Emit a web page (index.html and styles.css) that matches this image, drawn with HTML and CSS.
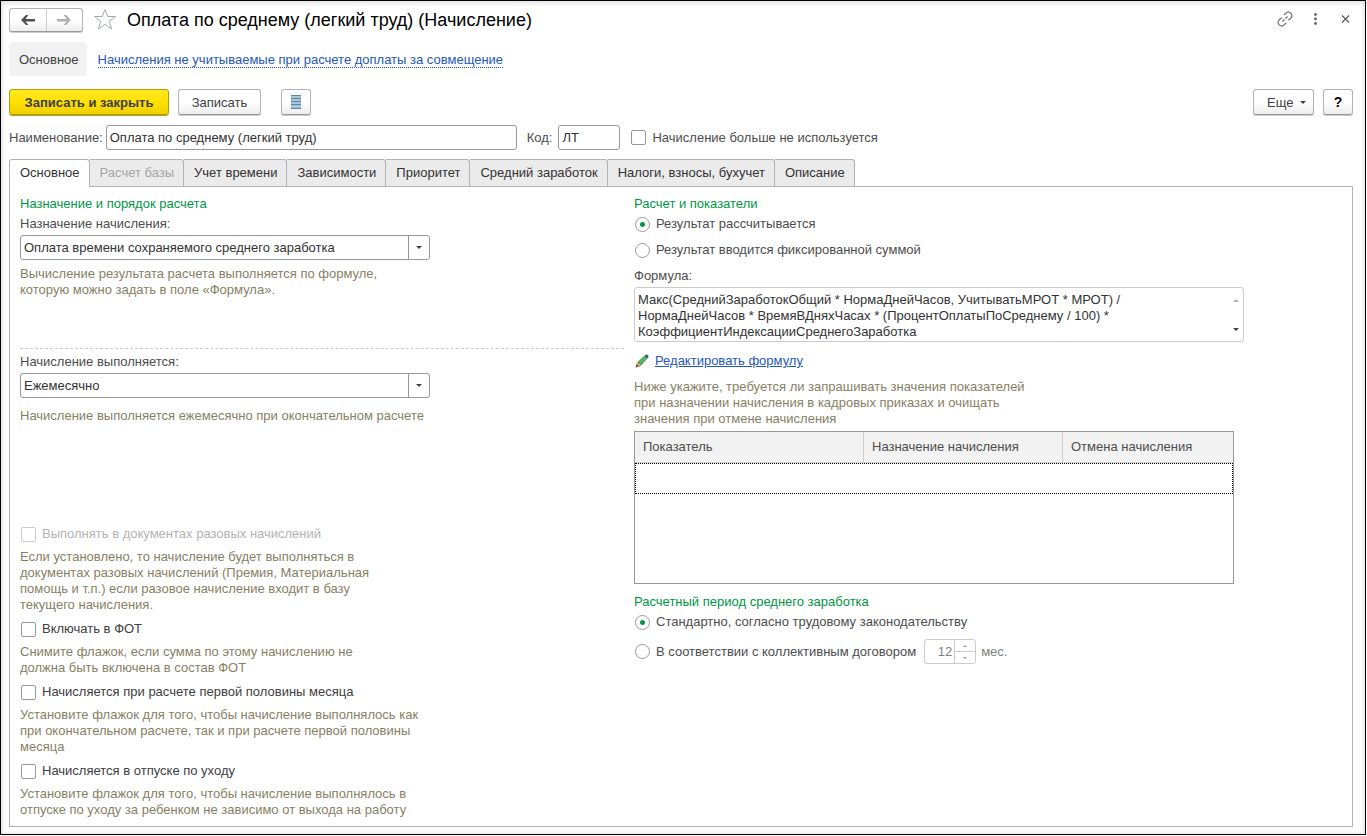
FILE: index.html
```html
<!DOCTYPE html>
<html lang="ru">
<head>
<meta charset="utf-8">
<title>Оплата по среднему (легкий труд) (Начисление)</title>
<link rel="stylesheet" href="styles.css">
</head>
<body>
<main class="window">
  <header class="titlebar">
    <div class="history">
      <button type="button" class="history-btn" aria-label="Назад">
        <svg width="14" height="10" viewBox="0 0 14 10"><path d="M0 5 5 0H7V.5L4.500 4H14V6.500H4.500L7 9.500V10H5Z" fill="#505050"/></svg>
      </button>
      <button type="button" class="history-btn" aria-label="Вперед">
        <svg width="14" height="10" viewBox="0 0 14 10"><path d="M14 5 9 0H7V.5L9.500 4H0V6.500H9.500L7 9.500V10H9Z" fill="#b0b0b0"/></svg>
      </button>
    </div>
    <button type="button" class="icon-btn star" aria-label="В избранное">
      <svg width="24" height="23" viewBox="0 0 24 23"><path d="M12 1.500 14.700 8.500H22.500L16.300 13.200 18.600 21 12 16.400 5.400 21 7.700 13.200 1.500 8.500H9.300Z" fill="#fff" stroke="#a3acb5" stroke-width="1"/></svg>
    </button>
    <h1 class="title">Оплата по среднему (легкий труд) (Начисление)</h1>
    <div class="window-tools">
      <button type="button" class="icon-btn" aria-label="Получить ссылку">
        <svg width="16" height="16" viewBox="0 0 16 16" fill="none" stroke="#666" stroke-width="1.100"><path d="M7 4 9.300 1.800Q11.500 0 13.800 2.200 16 4.500 14.200 6.700L12.500 8.500 10.800 9M9 12 6.700 14.200Q4.500 16 2.200 13.800 0 11.500 1.800 9.300L3.500 7.500 5.200 7M5.500 10.500l2-2M8.500 7.500l2-2"/></svg>
      </button>
      <button type="button" class="icon-btn" aria-label="Меню">
        <svg width="16" height="16" viewBox="0 0 16 16" fill="#666"><circle cx="8.500" cy="3.500" r="1.400"/><circle cx="8.500" cy="8" r="1.400"/><circle cx="8.500" cy="12.500" r="1.400"/></svg>
      </button>
      <button type="button" class="icon-btn" aria-label="Закрыть">
        <svg width="16" height="16" viewBox="0 0 16 16"><path d="M5 4.500l7 7M12 4.500l-7 7" stroke="#555" stroke-width="1.100"/></svg>
      </button>
    </div>
  </header>

  <nav class="sections">
    <span class="section-current">Основное</span>
    <a href="#" class="section-link">Начисления не учитываемые при расчете доплаты за совмещение</a>
  </nav>

  <div class="commands">
    <button type="button" class="btn btn-primary">Записать и закрыть</button>
    <button type="button" class="btn btn-save">Записать</button>
    <button type="button" class="btn btn-square btn-list" aria-label="Список">
      <svg width="10" height="14" viewBox="0 0 10 14"><path d="M0 0h10v14H0z" fill="#9dbdd3"/><path d="M0 .5h10M0 3.500h10M0 6.500h10M0 9.500h10M0 13.500h10" stroke="#6088a5"/><path d="M1 2h8M1 5h8M1 8h8M1 11.500h8" stroke="#b5cfe0"/></svg>
    </button>
    <div class="commands-right">
      <button type="button" class="btn btn-more">Еще <span class="caret"></span></button>
      <button type="button" class="btn btn-square btn-help">?</button>
    </div>
  </div>

  <div class="identity">
    <label for="name">Наименование:</label>
    <input id="name" class="field name" type="text" value="Оплата по среднему (легкий труд)">
    <label for="code" class="code-label">Код:</label>
    <input id="code" class="field code" type="text" value="ЛТ">
    <label class="option unused"><input type="checkbox" class="check">Начисление больше не используется</label>
  </div>

  <div class="tabs" role="tablist">
    <button type="button" role="tab" class="tab tab-active" aria-selected="true">Основное</button>
    <button type="button" role="tab" class="tab" disabled>Расчет базы</button>
    <button type="button" role="tab" class="tab">Учет времени</button>
    <button type="button" role="tab" class="tab">Зависимости</button>
    <button type="button" role="tab" class="tab">Приоритет</button>
    <button type="button" role="tab" class="tab">Средний заработок</button>
    <button type="button" role="tab" class="tab">Налоги, взносы, бухучет</button>
    <button type="button" role="tab" class="tab">Описание</button>
  </div>

  <div class="panel" role="tabpanel">
    <section class="column">
      <div class="purpose">
        <h2 class="group-title">Назначение и порядок расчета</h2>
        <label class="field-label" for="purpose">Назначение начисления:</label>
        <div class="combo"><select id="purpose" class="field combo-select"><option>Оплата времени сохраняемого среднего заработка</option></select></div>
        <p class="hint">Вычисление результата расчета выполняется по формуле,<br>которую можно задать в поле «Формула».</p>
      </div>
      <div class="schedule">
        <label class="field-label" for="schedule">Начисление выполняется:</label>
        <div class="combo"><select id="schedule" class="field combo-select"><option>Ежемесячно</option></select></div>
        <p class="hint hint-far">Начисление выполняется ежемесячно при окончательном расчете</p>
      </div>
      <div class="flags">
        <div class="flag">
          <label class="option option-disabled"><input type="checkbox" class="check" disabled>Выполнять в документах разовых начислений</label>
          <p class="hint">Если установлено, то начисление будет выполняться в<br>документах разовых начислений (Премия, Материальная<br>помощь и т.п.) если разовое начисление входит в базу<br>текущего начисления.</p>
        </div>
        <div class="flag">
          <label class="option"><input type="checkbox" class="check">Включать в ФОТ</label>
          <p class="hint">Снимите флажок, если сумма по этому начислению не<br>должна быть включена в состав ФОТ</p>
        </div>
        <div class="flag">
          <label class="option"><input type="checkbox" class="check">Начисляется при расчете первой половины месяца</label>
          <p class="hint">Установите флажок для того, чтобы начисление выполнялось как<br>при окончательном расчете, так и при расчете первой половины<br>месяца</p>
        </div>
        <div class="flag">
          <label class="option"><input type="checkbox" class="check">Начисляется в отпуске по уходу</label>
          <p class="hint">Установите флажок для того, чтобы начисление выполнялось в<br>отпуске по уходу за ребенком не зависимо от выхода на работу</p>
        </div>
      </div>
    </section>

    <section class="column">
      <h2 class="group-title">Расчет и показатели</h2>
      <div class="result-options">
        <label class="option"><input type="radio" name="result" class="radio" checked>Результат рассчитывается</label>
        <label class="option"><input type="radio" name="result" class="radio">Результат вводится фиксированной суммой</label>
        <label for="formula">Формула:</label>
      </div>
      <div class="formula">
        <textarea id="formula" class="formula-text" rows="3" readonly>Макс(СреднийЗаработокОбщий * НормаДнейЧасов, УчитыватьМРОТ * МРОТ) /
НормаДнейЧасов * ВремяВДняхЧасах * (ПроцентОплатыПоСреднему / 100) *
КоэффициентИндексацииСреднегоЗаработка</textarea>
        <div class="formula-scroll"><span class="caret caret-up"></span><span class="caret"></span></div>
      </div>
      <div class="edit">
        <svg width="14" height="14" viewBox="0 0 14 14"><path d="M.5 13.500 1.500 10 4 12.500Z" fill="#6a4a30"/><path d="M1.500 10 3 8 6 11 4 12.500Z" fill="#e8a85c" stroke="#9c7340" stroke-width=".5"/><path d="M3 8 9.500 2 12 4.500 6 11Z" fill="#50b860" stroke="#3d7d48" stroke-width=".6"/><path d="M9.500 2 11 .5H12L13.500 2V3L12 4.500Z" fill="#45556a"/></svg>
        <a href="#" class="edit-link">Редактировать формулу</a>
      </div>
      <p class="hint hint-table">Ниже укажите, требуется ли запрашивать значения показателей<br>при назначении начисления в кадровых приказах и очищать<br>значения при отмене начисления</p>
      <div class="grid-box">
        <table class="grid">
          <thead><tr><th class="col-name">Показатель</th><th class="col-assign">Назначение начисления</th><th>Отмена начисления</th></tr></thead>
          <tbody><tr><td colspan="3"></td></tr></tbody>
        </table>
      </div>
      <h2 class="group-title">Расчетный период среднего заработка</h2>
      <div class="period-options">
        <label class="option"><input type="radio" name="period" class="radio" checked>Стандартно, согласно трудовому законодательству</label>
        <div class="agreement">
          <label class="option"><input type="radio" name="period" class="radio">В соответствии с коллективным договором</label>
          <div class="spinner">
            <input type="number" id="months" class="spinner-value" value="12" disabled>
            <div class="spinner-buttons">
              <button type="button" disabled aria-label="Больше"><span class="tick tick-up"></span></button>
              <button type="button" disabled aria-label="Меньше"><span class="tick"></span></button>
            </div>
          </div>
          <label for="months" class="unit">мес.</label>
        </div>
      </div>
    </section>
  </div>
</main>
</body>
</html>
```
FILE: styles.css
```css
* {
  box-sizing: border-box;
}

body {
  margin: 0 1px 1px 0;
  background: #fff;
  color: #4d4d4d;
  font: 13px/16px "Liberation Sans", Arial, sans-serif;
}

button,
input,
select,
textarea {
  margin: 0;
  font: inherit;
  color: inherit;
}

h1,
h2,
p {
  margin: 0;
  font-weight: normal;
}

.window {
  display: flex;
  flex-direction: column;
  min-height: calc(100vh - 1px);
  padding: 6px 12px 7px 8px;
  border: 1px solid #000;
  box-shadow: inset 0 1px 5px 1px #ddd;
}

/* Title bar */
.titlebar {
  display: flex;
  align-items: center;
  height: 25px;
}

.history {
  display: flex;
  height: 24px;
  width: 74px;
  border: 1px solid #b3b3b3;
  border-bottom-color: #999;
  border-radius: 3px;
  background: linear-gradient(#fff 50%, #ededed);
  box-shadow: 0 1px 0 #ccc;
}

.history-btn {
  display: flex;
  flex: 1;
  align-items: center;
  justify-content: center;
  padding: 0;
  border: 0;
  background: none;
}

.history-btn + .history-btn {
  border-left: 1px solid #ccc;
}

.icon-btn {
  display: flex;
  padding: 0;
  border: 0;
  background: none;
}

.star {
  margin: 0 10px;
}

.title {
  color: #000;
  font-size: 18px;
  line-height: 24px;
}

.window-tools {
  display: flex;
  gap: 14px;
  margin-left: auto;
  padding-bottom: 2px;
}

/* Section navigation */
.sections {
  display: flex;
  align-items: center;
  gap: 11px;
  margin-top: 10px;
}

.section-current {
  padding: 10px 8px 8px 10px;
  border-radius: 4px;
  background: #f2f2f2;
  color: #404040;
}

.section-link {
  padding-top: 2px;
  border-bottom: 1px dotted #2457b8;
  color: #2457b8;
  line-height: 14px;
  text-decoration: none;
}

/* Command bar */
.commands {
  display: flex;
  margin-top: 13px;
}

.btn {
  height: 26px;
  padding: 1px 13px 0;
  border: 1px solid #b3b3b3;
  border-bottom-color: #999;
  border-radius: 3px;
  background: linear-gradient(#fff 50%, #ededed);
  box-shadow: 0 1px 0 #ccc;
  color: #404040;
  white-space: nowrap;
}

.btn-primary {
  width: 160px;
  padding: 1px 0 0;
  border-color: #b39b00;
  background: linear-gradient(#ffe922, #ffe100 50%, #f0cf00);
  box-shadow: 0 1px 0 #b8a21c;
  font-weight: bold;
}

.btn-save {
  width: 83px;
  margin-left: 9px;
  padding: 1px 0 0;
}

.btn-square {
  display: flex;
  align-items: center;
  justify-content: center;
  width: 30px;
  padding: 0;
}

.btn-list {
  margin-left: 20px;
}

.commands-right {
  display: flex;
  gap: 9px;
  margin-left: auto;
}

.btn-more {
  display: flex;
  align-items: center;
  gap: 7px;
  width: 61px;
  padding: 1px 6px 0 13px;
}

.btn-help {
  color: #000;
  font-size: 14px;
  font-weight: bold;
}

.caret {
  width: 0;
  border: 3px solid transparent;
  border-top-color: #404040;
  border-bottom: 0;
}

.caret-up {
  border-top: 0;
  border-bottom: 3px solid #b3b3b3;
}

/* Fields */
.field {
  height: 25px;
  padding: 0 3px;
  border: 1px solid #999;
  border-radius: 3px;
  background: #fff;
  color: #333;
}

.identity {
  display: flex;
  align-items: center;
  margin-top: 10px;
}

.name {
  width: 411px;
  margin-left: 3px;
}

.code-label {
  margin-left: 10px;
}

.code {
  width: 62px;
  margin-left: 6px;
}

.unused {
  margin-left: 11px;
}

.option {
  display: flex;
  align-items: center;
  gap: 6px;
}

.option-disabled {
  color: #b3b3b3;
}

.check,
.radio {
  appearance: none;
  flex: none;
  width: 15px;
  height: 15px;
  border: 1px solid #999;
  border-radius: 2px;
  background: #fff;
}

.check:disabled {
  border-color: #ccc;
}

.radio {
  border-radius: 50%;
}

.radio:checked {
  background: radial-gradient(circle, #009646 2px, #fff 3px);
}

/* Tabs */
.tabs {
  display: flex;
  margin-top: 9px;
}

.tab {
  height: 27px;
  padding: 0 9px 0 10px;
  border: 1px solid #b3b3b3;
  border-width: 1px 1px 0 0;
  border-radius: 0 3px 0 0;
  background: #ebebeb;
  color: #333;
}

.tab:disabled {
  color: #a6a6a6;
}

.tab-active {
  z-index: 1;
  height: 28px;
  margin-bottom: -1px;
  padding-bottom: 1px;
  border-left-width: 1px;
  border-radius: 3px 3px 0 0;
  background: #fff;
}

.panel {
  display: grid;
  flex: 1;
  grid-template-columns: 604fr 708fr;
  gap: 10px;
  padding: 9px 10px 8px;
  border: 1px solid #b3b3b3;
}

.group-title {
  color: #009646;
  font-size: 13px;
  line-height: 16px;
}

.field-label {
  display: block;
}

.hint {
  margin-top: 6px;
  color: #877f65;
}

/* Left column */
.purpose {
  min-height: 153px;
  border-bottom: 1px dashed #ccc;
}

.purpose .field-label {
  margin-top: 4px;
}

.schedule {
  min-height: 173px;
  padding-top: 5px;
}

.combo {
  position: relative;
  width: 410px;
  margin-top: 3px;
}

.combo-select {
  appearance: none;
  display: block;
  width: 100%;
  background: linear-gradient(#999, #999) right 20px top / 1px 100% no-repeat #fff;
}

.combo::after {
  content: "";
  position: absolute;
  top: 11px;
  right: 8px;
  border: 3px solid transparent;
  border-top-color: #404040;
  border-bottom: 0;
  pointer-events: none;
}

.hint-far {
  margin-top: 10px;
}

.flags {
  display: grid;
  gap: 8px;
  padding-top: 4px;
}

.flag .option {
  height: 16px;
}

.flag .hint {
  margin-top: 7px;
}

.flag .option:not(.option-disabled) {
  color: #404040;
}

.flag .check {
  margin-left: 1px;
}

/* Right column */
.result-options {
  display: grid;
  gap: 10px;
  margin-top: 4px;
}

.result-options .option,
.period-options .option {
  margin-left: 1px;
}

.formula {
  display: flex;
  width: 610px;
  margin-top: 3px;
  border: 1px solid #ccc;
  border-radius: 3px;
}

.formula-text {
  display: block;
  flex: 1;
  height: 53px;
  padding: 4px 3px 0;
  border: 0;
  background: none;
  color: #333;
  outline: 0;
  overflow: hidden;
  resize: none;
}

.formula-scroll {
  display: flex;
  flex-direction: column;
  justify-content: space-between;
  padding: 11px 4px 10px;
}

.edit {
  display: flex;
  align-items: center;
  gap: 6px;
  margin-top: 11px;
  padding-left: 1px;
}

.edit-link {
  color: #2457b8;
}

.hint-table {
  margin-top: 10px;
}

.grid-box {
  width: 600px;
  min-height: 153px;
  margin: 4px 0 10px;
  border: 1px solid #999;
}

.grid {
  width: 100%;
  border-spacing: 0;
  table-layout: fixed;
}

.grid th {
  height: 31px;
  padding: 0 8px;
  border-right: 1px solid #ccc;
  border-bottom: 1px solid #ccc;
  background: #f2f2f2;
  font-weight: normal;
  text-align: left;
}

.grid th:last-child {
  border-right: 0;
}

.col-name {
  width: 229px;
}

.col-assign {
  width: 199px;
}

.grid td {
  height: 31px;
  padding: 0;
  border: 1px dotted #000;
}

.period-options {
  display: grid;
  gap: 9px;
  margin-top: 4px;
}

.agreement {
  display: flex;
  align-items: center;
}

.spinner {
  display: flex;
  width: 52px;
  height: 25px;
  margin-left: 8px;
  border: 1px solid #ccc;
  border-radius: 3px;
}

.spinner-value {
  appearance: textfield;
  width: 29px;
  padding: 0 2px 0 0;
  border: 0;
  background: none;
  color: #808080;
  text-align: right;
}

.spinner-value::-webkit-inner-spin-button {
  appearance: none;
  margin: 0;
}

.spinner-buttons {
  display: grid;
  flex: 1;
  border-left: 1px solid #ccc;
}

.spinner-buttons button {
  display: flex;
  align-items: center;
  justify-content: center;
  padding: 0;
  border: 0;
  background: none;
}

.spinner-buttons button + button {
  border-top: 1px solid #ccc;
}

.tick {
  border: 2px solid transparent;
  border-top-color: #999;
  border-bottom: 0;
}

.tick-up {
  border-top: 0;
  border-bottom: 2px solid #999;
}

.unit {
  margin-left: 5px;
  color: #808080;
}
```
